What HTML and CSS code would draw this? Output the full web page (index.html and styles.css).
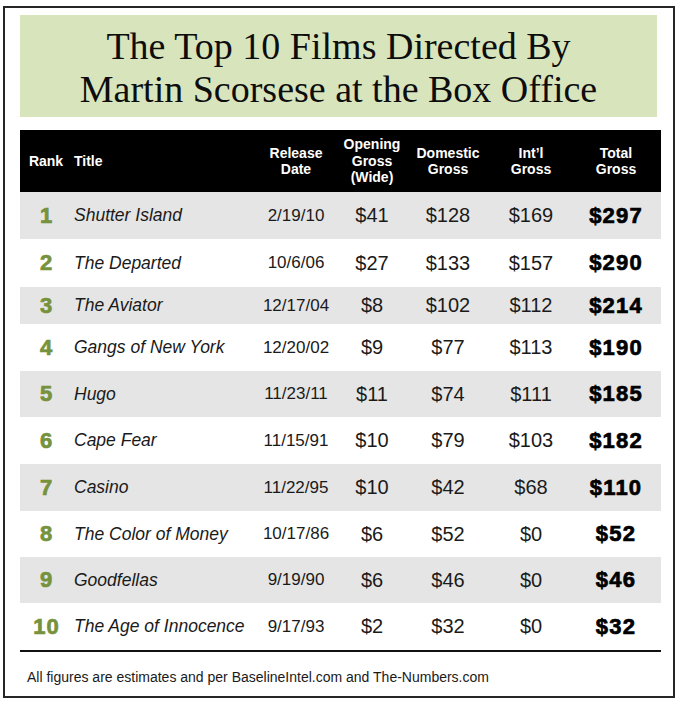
FILE: index.html
```html
<!DOCTYPE html>
<html lang="en">
<head>
<meta charset="utf-8">
<title>Top 10 Scorsese Films at the Box Office</title>
<link rel="stylesheet" href="styles.css">
</head>
<body>
<div class="frame">
  <div class="banner">
    <h1 class="heading">The Top 10 Films Directed By<br>Martin Scorsese at the Box Office</h1>
  </div>
  <div class="table">
    <div class="row head">
      <div class="c rank-h">Rank</div>
      <div class="c title-h">Title</div>
      <div class="c">Release<br>Date</div>
      <div class="c">Opening<br>Gross<br>(Wide)</div>
      <div class="c">Domestic<br>Gross</div>
      <div class="c">Int’l<br>Gross</div>
      <div class="c">Total<br>Gross</div>
    </div>
    <div class="row alt"><div class="c rank">1</div><div class="c film">Shutter Island</div><div class="c date">2/19/10</div><div class="c num">$41</div><div class="c num">$128</div><div class="c num">$169</div><div class="c total">$297</div></div>
    <div class="row tall"><div class="c rank">2</div><div class="c film">The Departed</div><div class="c date">10/6/06</div><div class="c num">$27</div><div class="c num">$133</div><div class="c num">$157</div><div class="c total">$290</div></div>
    <div class="row alt short"><div class="c rank">3</div><div class="c film">The Aviator</div><div class="c date">12/17/04</div><div class="c num">$8</div><div class="c num">$102</div><div class="c num">$112</div><div class="c total">$214</div></div>
    <div class="row"><div class="c rank">4</div><div class="c film">Gangs of New York</div><div class="c date">12/20/02</div><div class="c num">$9</div><div class="c num">$77</div><div class="c num">$113</div><div class="c total">$190</div></div>
    <div class="row alt mid"><div class="c rank">5</div><div class="c film">Hugo</div><div class="c date">11/23/11</div><div class="c num">$11</div><div class="c num">$74</div><div class="c num">$111</div><div class="c total">$185</div></div>
    <div class="row"><div class="c rank">6</div><div class="c film">Cape Fear</div><div class="c date">11/15/91</div><div class="c num">$10</div><div class="c num">$79</div><div class="c num">$103</div><div class="c total">$182</div></div>
    <div class="row alt"><div class="c rank">7</div><div class="c film">Casino</div><div class="c date">11/22/95</div><div class="c num">$10</div><div class="c num">$42</div><div class="c num">$68</div><div class="c total">$110</div></div>
    <div class="row mid"><div class="c rank">8</div><div class="c film">The Color of Money</div><div class="c date">10/17/86</div><div class="c num">$6</div><div class="c num">$52</div><div class="c num">$0</div><div class="c total">$52</div></div>
    <div class="row alt mid"><div class="c rank">9</div><div class="c film">Goodfellas</div><div class="c date">9/19/90</div><div class="c num">$6</div><div class="c num">$46</div><div class="c num">$0</div><div class="c total">$46</div></div>
    <div class="row last"><div class="c rank">10</div><div class="c film">The Age of Innocence</div><div class="c date">9/17/93</div><div class="c num">$2</div><div class="c num">$32</div><div class="c num">$0</div><div class="c total">$32</div></div>
  </div>
  <p class="note">All figures are estimates and per BaselineIntel.com and The-Numbers.com</p>
</div>
</body>
</html>
```
FILE: styles.css
```css
* { box-sizing: border-box; }
html, body { margin: 0; padding: 0; background: #fff; }
body { font-family: "Liberation Sans", Arial, sans-serif; color: #111; }

.frame {
  margin: 6px 0 0 3px;
  width: 672px;
  height: 692px;
  border: 2px solid #262626;
  padding: 7px 12px 0 15px;
}

.banner {
  width: 637px;
  height: 102px;
  background: #d8e4bc;
  padding-top: 10px;
  margin-bottom: 13px;
}
.heading {
  margin: 0;
  font-family: "Liberation Serif", "Times New Roman", serif;
  font-weight: normal;
  font-size: 38px;
  line-height: 43px;
  text-align: center;
  color: #0d0d0d;
}

.table { width: 641px; }
.row {
  display: grid;
  grid-template-columns: 52px 186px 76px 76px 76px 90px 80px;
  height: 47px;
  align-items: center;
  background: #fff;
}
.row.alt { background: #e5e5e5; }
.row.tall { height: 48px; }
.row.short { height: 37px; }
.row.mid { height: 46px; }
.row.last { border-bottom: 2px solid #111; height: 49px; }

.row.head {
  background: #000;
  color: #fff;
  height: 62px;
  font-weight: bold;
  font-size: 14px;
  line-height: 16.5px;
}
.c { text-align: center; white-space: nowrap; }
.rank-h { text-align: center; }
.title-h { text-align: left; padding-left: 2px; }

.rank {
  font-size: 22px;
  font-weight: bold;
  color: #76923c;
  letter-spacing: 1px;
  -webkit-text-stroke: 0.7px #76923c;
  padding-left: 1px;
}
.film {
  text-align: left;
  padding-left: 2px;
  font-style: italic;
  font-size: 17.5px;
  color: #1a1a1a;
}
.date { font-size: 17px; color: #1a1a1a; }
.num { font-size: 20px; color: #1a1a1a; }
.total {
  font-size: 22px;
  font-weight: bold;
  letter-spacing: 1.2px;
  -webkit-text-stroke: 0.7px #000;
  color: #000;
}

.note {
  margin: 17px 0 0 7px;
  font-size: 14px;
  line-height: 16px;
  color: #1a1a1a;
}
```
